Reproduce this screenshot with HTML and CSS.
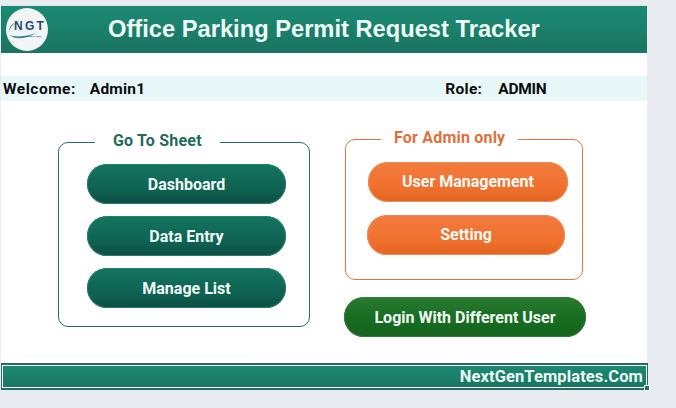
FILE: index.html
```html
<!DOCTYPE html>
<html lang="en">
<head>
<meta charset="utf-8">
<title>Office Parking Permit Request Tracker</title>
<link rel="stylesheet" href="styles.css">
</head>
<body>
<div class="sheet">
  <header class="banner">
    <div class="logo">
      <svg class="swoosh" viewBox="0 0 42 42" width="42" height="42" aria-hidden="true">
        <path d="M2 25 C6 30 14 30 30 25 C18 32 7 32 2 25 Z" fill="#2a8fa8"/>
        <path d="M3 23 C3 19 6 16 9 15 C6 18 4 20 3 23 Z" fill="#2a8fa8"/>
      </svg>
      <span class="logo-mark">NGT</span>
      <span class="logo-tag">NEXT GEN TEMPLATES</span>
    </div>
    <h1 class="title">Office Parking Permit Request Tracker</h1>
  </header>
  <div class="userbar">
    <span class="label">Welcome:</span><span class="user">Admin1</span>
    <span class="label role">Role:</span><span class="admin">ADMIN</span>
  </div>
  <main class="content">
    <fieldset class="panel panel-sheet">
      <legend>Go To Sheet</legend>
      <a class="btn btn-teal">Dashboard</a>
      <a class="btn btn-teal">Data Entry</a>
      <a class="btn btn-teal">Manage List</a>
    </fieldset>
    <div class="side">
      <fieldset class="panel panel-admin">
        <legend>For Admin only</legend>
        <a class="btn btn-orange">User Management</a>
        <a class="btn btn-orange btn-setting">Setting</a>
      </fieldset>
      <a class="btn btn-green">Login With Different User</a>
    </div>
  </main>
  <footer class="footer">
    <span>NextGenTemplates.Com</span>
    <i class="handle"></i>
  </footer>
</div>
</body>
</html>
```
FILE: styles.css
```css
* { box-sizing: border-box; }
html, body { margin: 0; height: 100%; overflow: hidden; }
body {
  background: #e8ecf1;
  font-family: "Roboto", "Liberation Sans", sans-serif;
}
.sheet {
  width: 646px;
  height: 384px;
  margin: 6px 0 0 1px;
  background: #fff;
  display: flex;
  flex-direction: column;
  box-shadow: 0 -1px 0 #dfe3e8;
}
.banner {
  height: 47px;
  flex: none;
  display: flex;
  align-items: center;
  background: linear-gradient(#1c8a73, #1a7461);
}
.logo {
  position: relative;
  width: 42px;
  height: 43px;
  margin-left: 5px;
  flex: none;
  border-radius: 50%;
  background: #f1f5f6;
  display: flex;
  flex-direction: column;
  align-items: center;
  justify-content: center;
}
.swoosh { position: absolute; left: 0; top: 0; }
.logo-mark {
  position: relative;
  margin-left: 6px;
  font: 700 12px/11px "Liberation Sans", sans-serif;
  letter-spacing: 2.2px;
  color: #1d4b6b;
}
.logo-tag {
  position: relative;
  margin-top: 3px;
  font: 700 2.5px/3px "Liberation Sans", sans-serif;
  color: #33506a;
  white-space: nowrap;
}
.title {
  margin: 0 0 0 60px;
  font: 700 23.7px/1 "Liberation Sans", sans-serif;
  color: #eefaf6;
  white-space: nowrap;
}
.userbar {
  height: 25px;
  flex: none;
  margin-top: 23px;
  padding-left: 2px;
  display: flex;
  align-items: center;
  background: #e8f8f8;
  font-size: 15.5px;
  font-weight: 700;
  letter-spacing: .5px;
  color: #0c0c0c;
}
.user { margin-left: 14px; letter-spacing: .2px; }
.role { margin-left: 300px; letter-spacing: .3px; }
.admin { margin-left: 16px; letter-spacing: -.3px; }
.content {
  height: 262px;
  flex: none;
  padding-left: 57px;
  display: flex;
  align-items: flex-start;
}
.panel {
  margin: 0;
  min-width: 0;
  display: flex;
  flex-direction: column;
  border-style: solid;
  border-width: 1px;
  border-radius: 10px;
}
.panel legend {
  font-size: 16px;
  font-weight: 700;
  line-height: 20px;
  letter-spacing: .2px;
}
.panel-sheet {
  width: 252px;
  height: 196px;
  margin-top: 30px;
  padding: 11px 0 0 28px;
  gap: 12px;
  border-color: #2a6b6a;
}
.panel-sheet legend {
  margin-left: 8px;
  padding: 0 18px 2px;
  color: #1f6a5c;
}
.side {
  margin: 0 0 0 35px;
  display: flex;
  flex-direction: column;
}
.panel-admin {
  width: 238px;
  height: 152px;
  margin-top: 27px;
  padding: 12px 0 0 22px;
  gap: 13px;
  border-color: #d57a45;
}
.panel-admin legend {
  margin-left: 13px;
  padding: 0 13px 2px;
  color: #e0703a;
}
.btn {
  display: flex;
  align-items: center;
  justify-content: center;
  width: 199px;
  height: 40px;
  flex: none;
  border-radius: 20px;
  font-size: 16px;
  font-weight: 700;
  color: #f1faf6;
  white-space: nowrap;
}
.btn-teal {
  background: linear-gradient(#13765f, #0e5f50 70%, #0a4d42);
  box-shadow: inset 0 0 0 1px #2b7d6d;
}
.btn-orange {
  width: 200px;
  padding-bottom: 2px;
  background: linear-gradient(#f27b3e, #f1712f 60%, #e3631f);
  box-shadow: inset 0 0 0 1px #ee8a58;
}
.btn-setting { width: 198px; margin-left: -1px; }
.btn-green {
  width: 242px;
  margin: 17px 0 0 -1px;
  background: linear-gradient(#2a7a32, #166d20 55%, #14631c);
  box-shadow: inset 0 0 0 1px #34793b;
}
.footer {
  position: relative;
  width: 647px;
  height: 27px;
  flex: none;
  display: flex;
  align-items: center;
  justify-content: flex-end;
  padding-right: 4px;
  background: linear-gradient(#1c8a73, #1a7461);
  border: 2px solid #256b5e;
  border-left-width: 1px;
  border-right-width: 1px;
  box-shadow: inset 0 0 0 1px #fff;
  font-size: 16.5px;
  font-weight: 700;
  letter-spacing: .1px;
  color: #eefaf6;
}
.handle {
  position: absolute;
  right: -3px;
  bottom: -3px;
  width: 6px;
  height: 6px;
  background: #1d7561;
  border: 1px solid #fff;
}
```
